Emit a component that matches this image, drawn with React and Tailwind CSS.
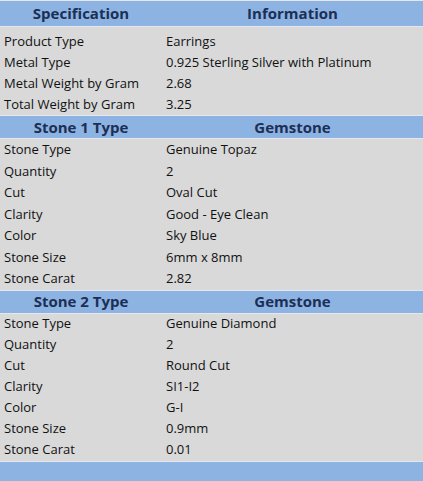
import React from "react";

const sections = [
  {
    head: ["Specification", "Information"],
    h: "h-[27px]",
    rh: "h-[21px]",
    first: "h-[25px] pt-[4px]",
    rows: [
      ["Product Type", "Earrings"],
      ["Metal Type", "0.925 Sterling Silver with Platinum"],
      ["Metal Weight by Gram", "2.68"],
      ["Total Weight by Gram", "3.25"],
    ],
  },
  {
    head: ["Stone 1 Type", "Gemstone"],
    h: "h-[24px]",
    rh: "h-[21.5px]",
    rows: [
      ["Stone Type", "Genuine Topaz"],
      ["Quantity", "2"],
      ["Cut", "Oval Cut"],
      ["Clarity", "Good - Eye Clean"],
      ["Color", "Sky Blue"],
      ["Stone Size", "6mm x 8mm"],
      ["Stone Carat", "2.82"],
    ],
  },
  {
    head: ["Stone 2 Type", "Gemstone"],
    h: "h-[24px]",
    rh: "h-[21px]",
    rows: [
      ["Stone Type", "Genuine Diamond"],
      ["Quantity", "2"],
      ["Cut", "Round Cut"],
      ["Clarity", "SI1-I2"],
      ["Color", "G-I"],
      ["Stone Size", "0.9mm"],
      ["Stone Carat", "0.01"],
    ],
  },
];

function HeadRow({ cells, h }) {
  return (
    <div className={`flex ${h} bg-[#8db3e2] border-y border-[#e6e6ee] text-[#1c2f55] font-bold text-[15px]`}>
      <div className="w-[162px] flex items-center justify-center">{cells[0]}</div>
      <div className="flex-1 flex items-center justify-center">{cells[1]}</div>
    </div>
  );
}

function DataRow({ cells, h }) {
  return (
    <div className={`flex ${h} bg-[#d9d9d9] text-[#111] text-[13px]`}>
      <div className="w-[162px] pl-1 flex items-center whitespace-nowrap">{cells[0]}</div>
      <div className="flex-1 pl-1 flex items-center whitespace-nowrap">{cells[1]}</div>
    </div>
  );
}

export default function App() {
  return (
    <div className="w-[423px] h-[481px] overflow-hidden bg-[#d9d9d9] flex flex-col" style={{ fontFamily: '"Open Sans", "DejaVu Sans", sans-serif' }}>
      {sections.map((s, i) => (
        <div key={i} className="flex flex-col">
          <HeadRow cells={s.head} h={s.h} />
          {s.rows.map((r, j) => (
            <DataRow key={j} cells={r} h={j === 0 && s.first ? s.first : s.rh} />
          ))}
        </div>
      ))}
      <div className="flex-1 bg-[#8db3e2] border-t border-[#e6e6ee]" />
    </div>
  );
}
